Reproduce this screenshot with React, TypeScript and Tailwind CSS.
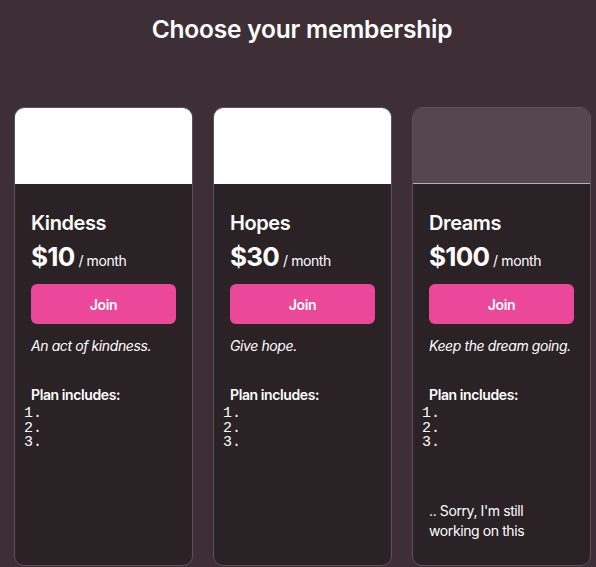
const PLANS = [
  { name: "Kindess", price: 10, blurb: "An act of kindness.", cover: "bg-white", note: false },
  { name: "Hopes", price: 30, blurb: "Give hope.", cover: "bg-white", note: false },
  { name: "Dreams", price: 100, blurb: "Keep the dream going.", cover: "bg-[#55474d] border-b border-[#b5adb1]", note: true },
];

function PlanCard({ plan }: { plan: (typeof PLANS)[number] }) {
  return (
    <div className="flex h-[459px] w-[179px] shrink-0 flex-col overflow-hidden rounded-[10px] border border-[#5d5157] bg-[#2b2226]">
      <div className={`h-[76px] shrink-0 ${plan.cover}`} />
      <div className="flex flex-1 flex-col px-4 pt-[25px] pb-6 tracking-[-0.4px]">
        <h2 className="text-[20px] leading-7 font-semibold text-white">{plan.name}</h2>
        <p className="mt-[2px] flex items-baseline text-white">
          <span className="text-[26px] leading-9 font-bold tracking-[-0.8px]">${plan.price}</span>
          <span className="ml-1 text-[14px]">/ month</span>
        </p>
        <button
          type="button"
          className="mt-[9px] h-10 w-full rounded-md bg-[#ec4899] text-[14px] font-semibold text-white"
        >
          Join
        </button>
        <p className="mt-3 text-[14px] leading-5 whitespace-nowrap italic text-white">{plan.blurb}</p>
        <p className="mt-[29px] text-[14px] leading-5 font-semibold text-white">Plan includes:</p>
        <ol className="-ml-[7px] mt-[2px] font-['Liberation_Mono',monospace] text-[15px] leading-[14.5px] tracking-normal text-white">
          <li>1.</li>
          <li>2.</li>
          <li>3.</li>
        </ol>
        {plan.note ? (
          <p className="mt-auto text-[14px] leading-5 text-white">
            .. Sorry, I'm still
            <br />
            working on this
          </p>
        ) : null}
      </div>
    </div>
  );
}

export default function App() {
  return (
    <div className="min-h-[567px] bg-[#3e2f36] font-['Inter',sans-serif]">
      <h1 className="pt-[13px] pl-2 text-center text-[24.5px] leading-8 font-semibold tracking-[-0.2px] text-white">
        Choose your membership
      </h1>
      <div className="mt-[62px] flex gap-[20px] pl-[14px]">
        {PLANS.map((plan) => (
          <PlanCard key={plan.name} plan={plan} />
        ))}
      </div>
    </div>
  );
}
